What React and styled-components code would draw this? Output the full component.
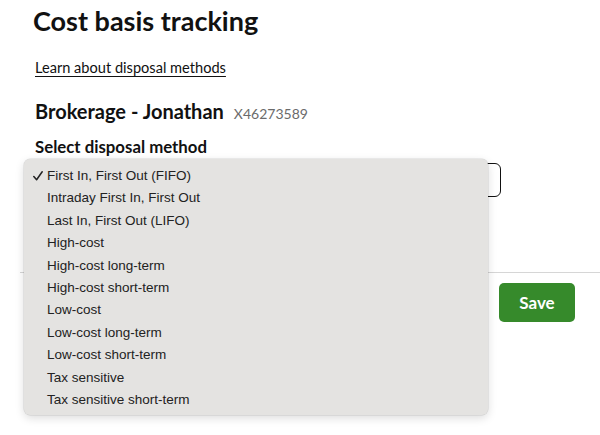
import React, { useState } from 'react';
import styled, { createGlobalStyle } from 'styled-components';

const GlobalStyle = createGlobalStyle`
  html, body {
    margin: 0;
    padding: 0;
    background: #ffffff;
  }
  body {
    font-family: Lato, "Noto Sans", sans-serif;
    color: #111111;
  }
`;

const Page = styled.main`
  width: 600px;
  height: 435px;
  overflow: hidden;
  padding: 5px 0 0 0;
  box-sizing: border-box;
`;

const Content = styled.section`
  padding: 0 99px 0 35px;
`;

const Title = styled.h1`
  margin: 0 0 0 -2px;
  font-size: 27px;
  font-weight: 700;
  line-height: 32px;
  color: #111111;
`;

const LearnLink = styled.a`
  display: inline-block;
  margin-top: 22px;
  font-size: 14.6px;
  line-height: 18px;
  color: #111111;
  text-decoration: underline;
  text-underline-offset: 3px;
  text-decoration-thickness: 1px;
  cursor: pointer;
`;

const AccountRow = styled.div`
  display: flex;
  align-items: baseline;
  gap: 10px;
  margin-top: 21px;
`;

const AccountName = styled.h2`
  margin: 0;
  font-size: 20px;
  font-weight: 700;
  line-height: 26px;
`;

const AccountNumber = styled.span`
  font-size: 14px;
  color: #6b6b6b;
`;

const FieldLabel = styled.label`
  display: block;
  margin-top: 13px;
  font-size: 16.8px;
  font-weight: 700;
  line-height: 20px;
`;

const SelectWrap = styled.div`
  position: relative;
  margin-top: 6px;
`;

const SelectBox = styled.div`
  height: 34px;
  border: 1.5px solid #111111;
  border-radius: 6px;
  box-sizing: border-box;
`;

const Menu = styled.ul`
  position: absolute;
  left: -11px;
  top: -4px;
  width: 464px;
  margin: 0;
  padding: 6px 0 4px;
  list-style: none;
  background: #e4e3e1;
  border-radius: 6px;
  box-shadow: 0 0 0 0.5px rgba(0, 0, 0, 0.12), 0 3px 10px rgba(0, 0, 0, 0.14);
  font-family: "Liberation Sans", Arial, sans-serif;
  font-size: 13.5px;
  color: #222222;
  z-index: 2;
`;

const MenuItem = styled.li`
  position: relative;
  height: 22.4px;
  line-height: 22.4px;
  padding-left: 23px;
  cursor: default;
`;

const CheckMark = styled.svg`
  position: absolute;
  left: 9px;
  top: 6px;
  width: 10px;
  height: 10px;
`;

const Footer = styled.div`
  display: flex;
  justify-content: flex-end;
  margin: 75px 0 0 20px;
  padding: 10px 25px 0 0;
  border-top: 1px solid #d6d6d6;
`;

const SaveButton = styled.button`
  width: 76px;
  height: 39px;
  border: none;
  border-radius: 5px;
  background: #368a2b;
  color: #ffffff;
  font-family: Lato, "Noto Sans", sans-serif;
  font-size: 17px;
  font-weight: 700;
  cursor: pointer;
`;

const methods = [
  'First In, First Out (FIFO)',
  'Intraday First In, First Out',
  'Last In, First Out (LIFO)',
  'High-cost',
  'High-cost long-term',
  'High-cost short-term',
  'Low-cost',
  'Low-cost long-term',
  'Low-cost short-term',
  'Tax sensitive',
  'Tax sensitive short-term',
];

export default function App() {
  const [selected, setSelected] = useState(methods[0]);

  return (
    <>
      <GlobalStyle />
      <Page>
        <Content>
          <Title>Cost basis tracking</Title>
          <LearnLink>Learn about disposal methods</LearnLink>
          <AccountRow>
            <AccountName>Brokerage - Jonathan</AccountName>
            <AccountNumber>X46273589</AccountNumber>
          </AccountRow>
          <FieldLabel>Select disposal method</FieldLabel>
          <SelectWrap>
            <SelectBox />
            <Menu>
              {methods.map(m => (
                <MenuItem key={m} onClick={() => setSelected(m)}>
                  {m === selected && (
                    <CheckMark viewBox="0 0 10 10" fill="none">
                      <path d="M0.8 5.6 L3.6 8.8 L9.2 0.8" stroke="#222" strokeWidth="1.5" strokeLinecap="round" strokeLinejoin="round" />
                    </CheckMark>
                  )}
                  {m}
                </MenuItem>
              ))}
            </Menu>
          </SelectWrap>
        </Content>
        <Footer>
          <SaveButton>Save</SaveButton>
        </Footer>
      </Page>
    </>
  );
}
